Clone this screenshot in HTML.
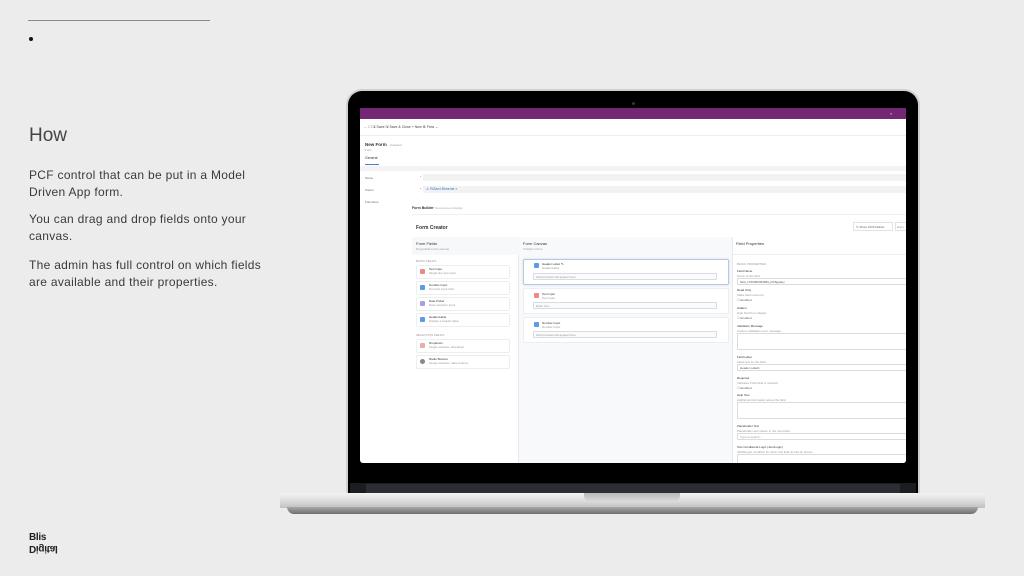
<!DOCTYPE html>
<html><head><meta charset="utf-8"><style>
*{margin:0;padding:0;box-sizing:border-box}
body{width:1024px;height:576px;background:#ececec;font-family:"Liberation Sans",sans-serif;position:relative;overflow:hidden}
.a{position:absolute}
.t{position:absolute;font-size:4px;color:#333;white-space:nowrap}
.s{position:absolute;font-size:3px;color:#999;white-space:nowrap}
.card{position:absolute;background:#fff;border:1px solid #eceef2;border-radius:2px}
.inp{position:absolute;background:#fafbfc;border:1px solid #d8dce2;border-radius:1px}
.ic{position:absolute;width:5px;height:5px;border-radius:1px}
</style></head><body>
<div class="a" style="left:28px;top:20px;width:182px;height:1px;background:#8a8a8a"></div>
<div class="a" style="left:29px;top:37px;width:4px;height:4px;border-radius:50%;background:#111"></div>
<div class="a" style="left:29px;top:125px;font-size:19px;color:#444;font-weight:300">How</div>
<div class="a" style="left:29px;top:167px;width:240px;font-size:12px;letter-spacing:0.3px;line-height:17px;color:#3a3a3a">
<p>PCF control that can be put in a Model Driven App form.</p>
<p style="margin-top:10px">You can drag and drop fields onto your canvas.</p>
<p style="margin-top:12px">The admin has full control on which fields are available and their properties.</p></div>
<div class="a" style="left:29px;top:533px;font-size:10px;font-weight:bold;line-height:10px;color:#222;letter-spacing:-0.3px">Blis<br><span style="display:inline-block;transform:scaleY(-1)">Digital</span></div>

<!-- laptop -->
<div class="a" style="left:346px;top:89px;width:574px;height:406px;background:#d0d0d0;border-radius:16px 16px 0 0"></div>
<div class="a" style="left:348px;top:91px;width:570px;height:404px;background:#000;border-radius:14px 14px 0 0"></div>
<div class="a" style="left:632px;top:102px;width:3px;height:3px;border-radius:50%;background:#333"></div>
<div class="a" style="left:350px;top:483px;width:566px;height:12px;background:#1c1d20"></div>
<div class="a" style="left:366px;top:484px;width:534px;height:9px;background:#2c2e33"></div>
<div class="a" style="left:280px;top:493px;width:705px;height:15px;background:linear-gradient(#f4f4f4,#d8d8d8 60%,#c0c0c0);border-radius:2px 2px 0 0"></div>
<div class="a" style="left:287px;top:507px;width:691px;height:7px;background:linear-gradient(#a8a8a8,#6f6f6f);border-radius:0 0 10px 10px"></div>
<div class="a" style="left:584px;top:493px;width:96px;height:8px;background:linear-gradient(#b8b8b8,#d8d8d8);border-radius:0 0 5px 5px"></div>

<!-- screen -->
<div class="a" style="left:360px;top:108px;width:546px;height:355px;background:#fff;overflow:hidden;border-radius:0 0 3px 3px">
 <div class="a" style="left:0;top:0;width:546px;height:11px;background:#742774"></div>
 <div class="t" style="left:530px;top:3px;color:#ddd">⌕</div>
 <div class="t" style="left:4px;top:17px;color:#444;font-size:3.5px">←  ☐  🖫 Save  🖫 Save &amp; Close  + New  ⚙ Flow ⌄</div>
 <div class="a" style="left:0;top:27px;width:546px;height:1px;background:#eee"></div>
 <div class="t" style="left:5px;top:34px;font-weight:bold;font-size:4.5px">New Form <span style="font-weight:normal;color:#999;font-size:3px">- Unsaved</span></div>
 <div class="s" style="left:5px;top:40px">Form</div>
 <div class="t" style="left:5px;top:48px;font-size:3.5px">General</div>
 <div class="a" style="left:5px;top:56px;width:14px;height:1px;background:#4a7bd0"></div>
 <div class="a" style="left:0;top:58px;width:546px;height:5px;background:#f3f3f3"></div>
 <div class="s" style="left:5px;top:68px;color:#666">Name</div>
 <div class="s" style="left:5px;top:80px;color:#666">Owner</div>
 <div class="s" style="left:5px;top:92px;color:#666">Formdune</div>
 <div class="s" style="left:60px;top:67px;color:#c33">*</div>
 <div class="s" style="left:60px;top:79px;color:#c33">*</div>
 <div class="a" style="left:63px;top:66px;width:483px;height:7px;background:#f2f2f2"></div>
 <div class="a" style="left:63px;top:78px;width:483px;height:7px;background:#f2f2f2"></div>
 <div class="t" style="left:66px;top:79px;color:#3a6fc4;font-size:3.5px">♙ RiZard Bhnenie ×</div>
 <div class="t" style="left:52px;top:98px;font-weight:bold;font-size:3.5px">Form Builder <span style="font-weight:normal;color:#aaa;font-size:3px">Development display</span></div>
 <div class="a" style="left:52px;top:106px;width:494px;height:1px;background:#f0f0f0"></div>
 <div class="t" style="left:56px;top:117px;font-weight:bold;font-size:5px">Form Creator</div>
 <div class="a" style="left:493px;top:114px;width:40px;height:9px;border:1px solid #e2e2e2;border-radius:1px"></div>
 <div class="s" style="left:496px;top:117px;color:#666">✎ Show JSON Editor</div>
 <div class="a" style="left:535px;top:114px;width:15px;height:9px;border:1px solid #e2e2e2"></div>
 <div class="s" style="left:537px;top:117px">Expo</div>
 <div class="a" style="left:52px;top:129px;width:107px;height:226px;background:#fff;border-right:1px solid #e8e8e8"></div>
 <div class="a" style="left:52px;top:129px;width:107px;height:18px;background:#f7f8fa"></div>
 <div class="a" style="left:159px;top:129px;width:214px;height:226px;background:#f8f9fb;border-right:1px solid #e8e8e8"></div>
 <div class="a" style="left:373px;top:129px;width:173px;height:226px;background:#fff"></div>
 <div class="a" style="left:373px;top:129px;width:173px;height:18px;border-bottom:1px solid #eee"></div>
 <div class="t" style="left:56px;top:133px">Form Fields</div><div class="s" style="left:56px;top:139px">Drag fields to the canvas</div>
 <div class="t" style="left:163px;top:133px">Form Canvas</div><div class="s" style="left:163px;top:139px">3 fields in form</div>
 <div class="t" style="left:376px;top:133px">Field Properties</div>
 <div class="s" style="left:56px;top:151px">BASIC FIELDS</div>
 <div class="card" style="left:56px;top:157px;width:94px;height:14px"></div><div class="ic" style="left:60px;top:161px;background:#e88"></div><div class="t" style="left:69px;top:159px;font-size:3px">Text Input</div><div class="s" style="left:69px;top:163px">Single line text input</div>
 <div class="card" style="left:56px;top:173px;width:94px;height:14px"></div><div class="ic" style="left:60px;top:177px;background:#5b9be8"></div><div class="t" style="left:69px;top:175px;font-size:3px">Number Input</div><div class="s" style="left:69px;top:179px">Numeric input field</div>
 <div class="card" style="left:56px;top:189px;width:94px;height:14px"></div><div class="ic" style="left:60px;top:193px;background:#a8a0e0"></div><div class="t" style="left:69px;top:191px;font-size:3px">Date Picker</div><div class="s" style="left:69px;top:195px">Date selection input</div>
 <div class="card" style="left:56px;top:205px;width:94px;height:14px"></div><div class="ic" style="left:60px;top:209px;background:#5b9be8"></div><div class="t" style="left:69px;top:207px;font-size:3px">HeaderLabel</div><div class="s" style="left:69px;top:211px">Display a header label</div>
 <div class="s" style="left:56px;top:225px">SELECTION FIELDS</div>
 <div class="card" style="left:56px;top:231px;width:94px;height:14px"></div><div class="ic" style="left:60px;top:235px;background:#e8b0a0"></div><div class="t" style="left:69px;top:233px;font-size:3px">Dropdown</div><div class="s" style="left:69px;top:237px">Single selection dropdown</div>
 <div class="card" style="left:56px;top:247px;width:94px;height:14px"></div><div class="ic" style="left:60px;top:251px;background:#888;border-radius:50%"></div><div class="t" style="left:69px;top:249px;font-size:3px">Radio Buttons</div><div class="s" style="left:69px;top:253px">Single selection radio buttons</div>
 <div class="card" style="left:163px;top:151px;width:206px;height:26px;border:1px solid #b8c8e0;box-shadow:0 0 2px #c8d6ea"></div>
 <div class="ic" style="left:174px;top:155px;background:#5b9be8"></div><div class="t" style="left:182px;top:154px;font-size:3px">Header Label *1</div><div class="s" style="left:182px;top:158px">HeaderLabel</div>
 <div class="inp" style="left:173px;top:165px;width:184px;height:7px"></div><div class="s" style="left:176px;top:167px">Field preview will appear here</div>
 <div class="card" style="left:163px;top:180px;width:206px;height:26px"></div>
 <div class="ic" style="left:174px;top:185px;background:#e88"></div><div class="t" style="left:182px;top:184px;font-size:3px">Text Input</div><div class="s" style="left:182px;top:188px">Text Input</div>
 <div class="inp" style="left:173px;top:194px;width:184px;height:7px"></div><div class="s" style="left:176px;top:196px">Enter text...</div>
 <div class="card" style="left:163px;top:209px;width:206px;height:26px"></div>
 <div class="ic" style="left:174px;top:214px;background:#5b9be8"></div><div class="t" style="left:182px;top:213px;font-size:3px">Number Input</div><div class="s" style="left:182px;top:217px">Number Input</div>
 <div class="inp" style="left:173px;top:223px;width:184px;height:7px"></div><div class="s" style="left:176px;top:225px">Field preview will appear here</div>
 <div class="s" style="left:377px;top:154px">BASIC PROPERTIES</div>
 <div class="t" style="left:377px;top:161px;font-size:3px">Field Name</div><div class="s" style="left:377px;top:166px">Name of the field</div>
 <div class="inp" style="left:377px;top:170px;width:170px;height:7px;background:#fff"></div><div class="s" style="left:380px;top:172px;color:#555">field_1760069492839_b6r5gq4ey</div>
 <div class="t" style="left:377px;top:180px;font-size:3px">Read Only</div><div class="s" style="left:377px;top:185px">Make field read only</div><div class="s" style="left:377px;top:190px;color:#666">☐ Enabled</div>
 <div class="t" style="left:377px;top:198px;font-size:3px">Hidden</div><div class="s" style="left:377px;top:203px">Hide field from display</div><div class="s" style="left:377px;top:208px;color:#666">☐ Enabled</div>
 <div class="t" style="left:377px;top:216px;font-size:3px">Validation Message</div><div class="s" style="left:377px;top:221px">Custom validation error message</div>
 <div class="inp" style="left:377px;top:225px;width:170px;height:17px;background:#fff"></div>
 <div class="t" style="left:377px;top:247px;font-size:3px">Field Label</div><div class="s" style="left:377px;top:252px">Label text for the field</div>
 <div class="inp" style="left:377px;top:256px;width:170px;height:7px;background:#fff"></div><div class="s" style="left:380px;top:258px;color:#555">Header Label1</div>
 <div class="t" style="left:377px;top:268px;font-size:3px">Required</div><div class="s" style="left:377px;top:273px">Indicates if this field is required</div><div class="s" style="left:377px;top:278px;color:#666">☐ Enabled</div>
 <div class="t" style="left:377px;top:285px;font-size:3px">Help Text</div><div class="s" style="left:377px;top:290px">Additional information about the field</div>
 <div class="inp" style="left:377px;top:294px;width:170px;height:17px;background:#fff"></div>
 <div class="t" style="left:377px;top:316px;font-size:3px">Placeholder Text</div><div class="s" style="left:377px;top:321px">Placeholder text shown in the input field</div>
 <div class="inp" style="left:377px;top:325px;width:170px;height:7px;background:#fff"></div><div class="s" style="left:380px;top:327px">Type to search...</div>
 <div class="t" style="left:377px;top:337px;font-size:3px">Test Conditional Logic (JsonLogic)</div><div class="s" style="left:377px;top:342px">JSONLogic condition for when this field should be shown</div>
 <div class="inp" style="left:377px;top:346px;width:170px;height:12px;background:#fff"></div>
</div>
</body></html>
